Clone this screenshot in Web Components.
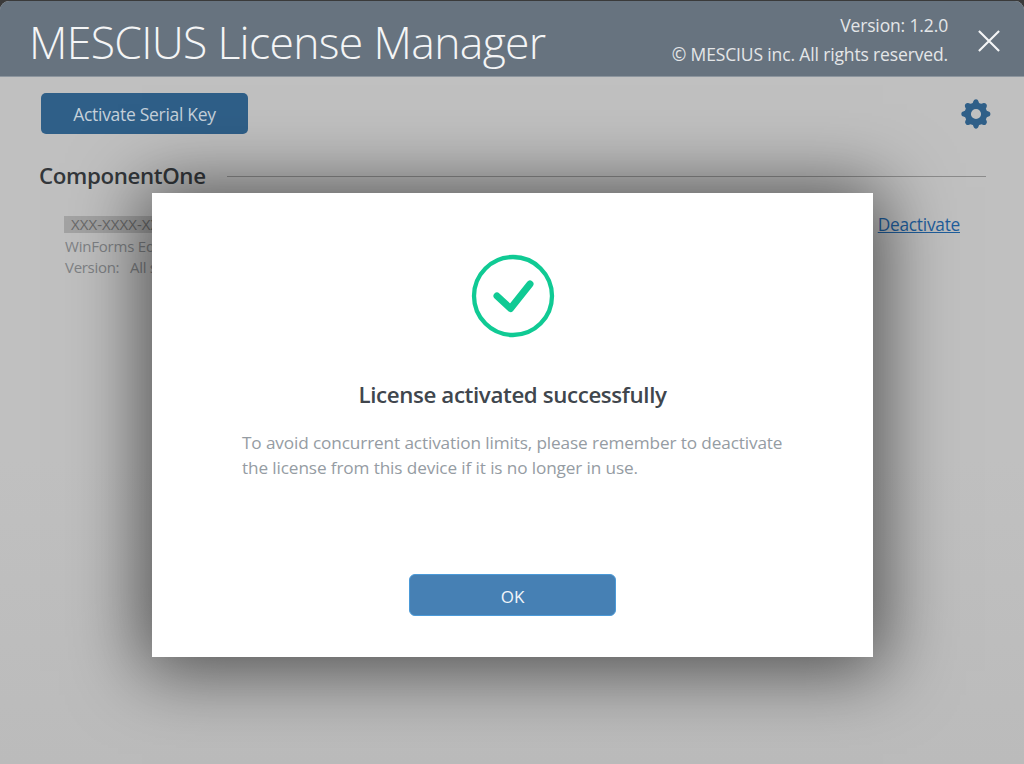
<!DOCTYPE html>
<html><head><meta charset="utf-8"><style>
html,body{margin:0;height:100%;background:#3a3a3a;overflow:hidden}
body{font-family:"Open Sans","Noto Sans",sans-serif}
</style></head><body>
<license-window>
  <license-header slot="header" title-text="MESCIUS License Manager" version="Version: 1.2.0" copyright="© MESCIUS inc. All rights reserved."></license-header>
  <license-toolbar></license-toolbar>
  <license-section heading="ComponentOne">
    <license-entry serial="XXX-XXXX-XXX" edition="WinForms Edition" ver="All supported versions"></license-entry>
  </license-section>
  <success-modal slot="modal" heading="License activated successfully" message="To avoid concurrent activation limits, please remember to deactivate the license from this device if it is no longer in use." action="OK"></success-modal>
</license-window>
<script>
function def(name, css, html){
  customElements.define(name, class extends HTMLElement{
    constructor(){super();this.attachShadow({mode:'open'})}
    connectedCallback(){
      const a={};for(const x of this.attributes)a[x.name]=x.value;
      this.shadowRoot.innerHTML='<style>'+css+'</style>'+html(a);
    }
  });
}
def('license-window',`
:host{display:flex;flex-direction:column;position:relative;box-sizing:border-box;width:1024px;height:764px;padding-top:1px;font-family:"Open Sans","Noto Sans",sans-serif}
.frame{flex:1;display:flex;flex-direction:column;background:linear-gradient(#c0c0c0,#c0c0c0 60%,#bbb);border-radius:9px 9px 0 0;overflow:hidden}
`,()=>`<div class="frame"><slot name="header"></slot><slot></slot></div><slot name="modal"></slot>`);

def('license-header',`
:host{display:flex;justify-content:space-between;align-items:flex-start;height:76px;flex:none;background:#67737f;color:#fff;box-sizing:border-box;border-bottom:1px solid #8c959e}
h1{margin:11px 0 0 29px;font:300 44.5px/60px "Open Sans",sans-serif;letter-spacing:-.68px;white-space:nowrap;color:#f4f5f6}
.r{display:flex;align-items:flex-start}
.meta{margin-top:10px;text-align:right;font:400 17.5px/29px "Open Sans",sans-serif;color:#e4e6e8;letter-spacing:-.14px;white-space:nowrap}
.close{margin:29px 24px 0 30px;width:22px;height:22px;display:block}
`,a=>`<h1>${a['title-text']}</h1><div class="r"><div class="meta"><div>${a.version}</div><div>${a.copyright}</div></div>
<svg class="close" viewBox="0 0 24 24"><path d="M1 1 23 23M23 1 1 23" stroke="#f4f5f6" stroke-width="2.300" fill="none"/></svg></div>`);

def('license-toolbar',`
:host{display:flex;justify-content:space-between;align-items:center;padding:16px 32px 0 41px;flex:none}
button{width:207px;height:41px;border:0;border-radius:5px;background:#2f5f88;color:#c4d0da;font:400 17.5px/41px "Open Sans",sans-serif;letter-spacing:-.3px;padding:1px 0 0;box-sizing:border-box}
svg{width:32px;height:32px;display:block}
`,()=>`<button>Activate Serial Key</button>
<svg viewBox="0 0 24 24"><path fill="#2f5f88" fill-rule="evenodd" d="M12 1c1 0 1.500.6 1.800 1.400l.5 1.300c.6.200 1.100.4 1.600.7l1.300-.5c.9-.3 1.700-.2 2.300.5.700.7.800 1.400.5 2.300l-.6 1.300c.3.500.5 1 .7 1.600l1.300.5c.8.300 1.400.8 1.400 1.900s-.6 1.600-1.400 1.900l-1.300.5c-.2.600-.4 1.100-.7 1.600l.6 1.300c.3.900.2 1.600-.5 2.300-.6.700-1.400.8-2.300.5l-1.300-.5c-.5.300-1 .5-1.600.7l-.5 1.300c-.3.800-.8 1.400-1.800 1.400s-1.500-.6-1.800-1.400l-.5-1.300c-.6-.2-1.100-.4-1.600-.7l-1.300.5c-.9.300-1.700.2-2.300-.5-.7-.7-.8-1.400-.5-2.300l.6-1.300c-.3-.5-.5-1-.7-1.600l-1.300-.5C1.600 13.600 1 13.100 1 12s.6-1.600 1.400-1.900l1.300-.5c.2-.6.400-1.100.7-1.600l-.6-1.300c-.3-.9-.2-1.600.5-2.300.6-.7 1.400-.8 2.300-.5l1.300.5c.5-.3 1-.5 1.600-.7l.5-1.300C10.500 1.600 11 1 12 1zm0 7.200a3.800 3.800 0 1 0 0 7.600 3.800 3.800 0 0 0 0-7.600z"/></svg>`);

def('license-section',`
:host{display:block;padding:27px 38px 0 39px}
.h{display:flex;align-items:center;gap:21px}
h2{margin:0;font:600 22.3px/30px "Open Sans",sans-serif;letter-spacing:-.37px;color:#33373b;white-space:nowrap}
i{flex:1;height:1px;background:#8b8b8b}
.b{padding:25px 26px 0 26px}
`,a=>`<div class="h"><h2>${a.heading}</h2><i></i></div><div class="b"><slot></slot></div>`);

def('license-entry',`
:host{display:flex;justify-content:space-between;font:400 15px/21px "Open Sans",sans-serif;color:#7f8285;letter-spacing:-.2px}
.s{display:block;width:fit-content;background:#a3a3a3;color:#6a6a6a;padding:0 7px;margin-left:-1px;line-height:17px;height:17px;margin-bottom:3px;letter-spacing:.05px}
.v{letter-spacing:-.3px}
a{color:#1f5e9c;font-size:17.3px;line-height:20px;text-decoration:underline;letter-spacing:-.25px;margin-top:-1px;height:20px}
`,a=>`<div><span class="s">${a.serial}</span><div>${a.edition}</div><div class="v">Version: &nbsp;&nbsp;${a.ver}</div></div><a>Deactivate</a>`);

def('success-modal',`
:host{position:absolute;left:152px;top:193px;width:721px;height:464px;box-sizing:border-box;background:#fff;box-shadow:0 4px 68px 10px rgba(0,0,0,.58);display:flex;flex-direction:column;align-items:center;padding-top:61px}
svg{width:84px;height:84px;display:block;flex:none}
h3{margin:42px 0 0;font:600 22.3px/30px "Open Sans",sans-serif;letter-spacing:-.38px;color:#40464d;white-space:nowrap}
p{align-self:flex-start;margin:21px 0 0 90px;width:556px;font:400 17.2px/24.5px "Open Sans",sans-serif;letter-spacing:-.12px;color:#959ca3}
.sp{flex:1}
button{width:207px;height:42px;margin-bottom:41px;box-sizing:border-box;border:1px solid #4b9ad8;border-radius:6px;background:#4680b4;color:#f2f6fa;font:400 17px "Open Sans",sans-serif;padding:2px 0 0}
`,a=>`<svg viewBox="0 0 84 84"><circle cx="42" cy="42" r="39" fill="none" stroke="#10ca94" stroke-width="4.300"/><path d="M26 42 39.500 54.500 59 30" fill="none" stroke="#10ca94" stroke-width="7" stroke-linecap="round" stroke-linejoin="round"/></svg>
<h3>${a.heading}</h3><p>${a.message}</p><div class="sp"></div><button>${a.action}</button>`);
</script>
</body></html>
